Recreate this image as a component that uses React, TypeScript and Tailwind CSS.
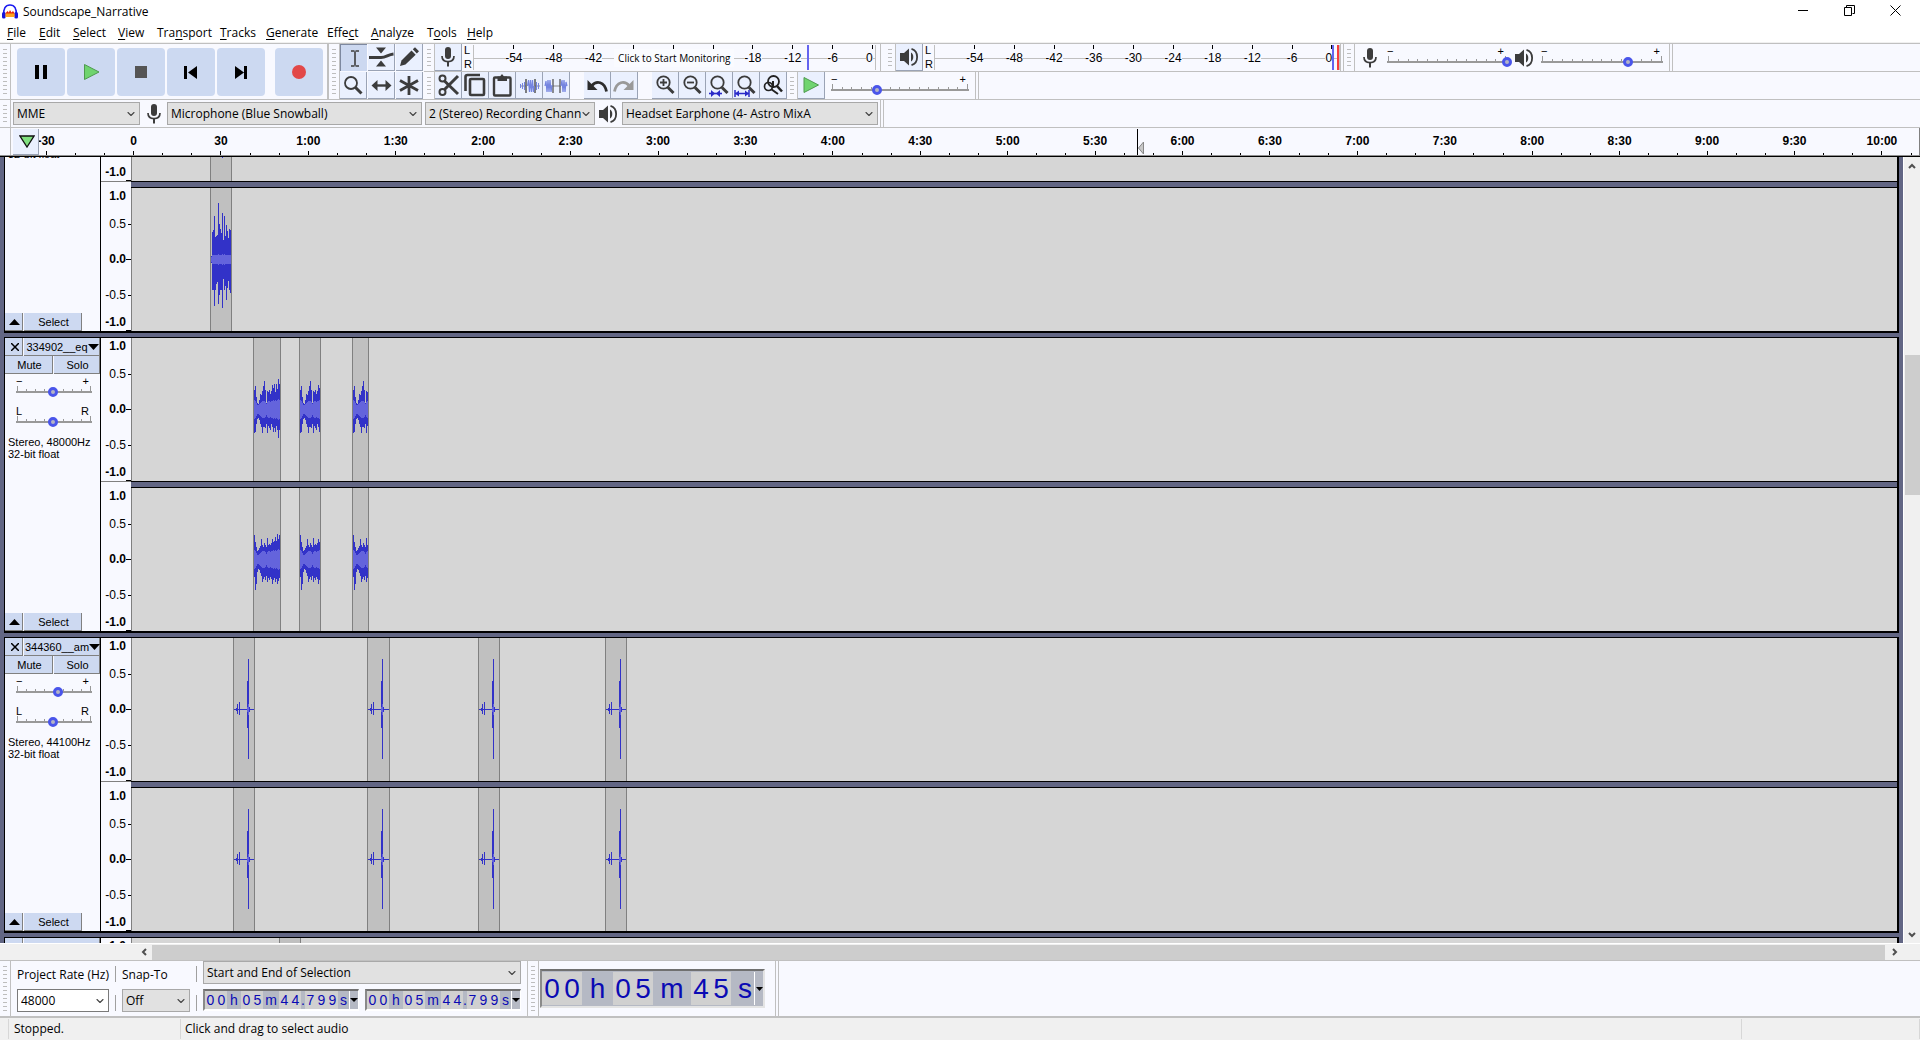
import React, { useState } from "react";
import { ChevronDown } from "lucide-react";

const INK = "#3c3c3c";

/* ---------- icons ---------- */

const Logo = () => (
  <svg className="size-4" viewBox="0 0 16 16">
    <path d="M2 11C1 4.500 3.500 1 8 1s7 3.500 6 10" fill="none" stroke="#1a1af0" strokeWidth="1.600" />
    <rect x="0" y="8" width="3.600" height="6.500" rx="1.600" fill="#1414dc" />
    <rect x="12.400" y="8" width="3.600" height="6.500" rx="1.600" fill="#1414dc" />
    <path d="M3.600 9l2-2 1.200 1.500L8 6l1.500 2.500L11 7l1.400 2v3H3.600z" fill="#e8290b" />
    <rect x="3.600" y="9.500" width="8.800" height="3.500" fill="#ffa51f" />
  </svg>
);

const Mic = () => (
  <svg className="h-5 w-4 shrink-0" viewBox="0 0 16 20">
    <rect x="5" y="0" width="6" height="12" rx="3" fill={INK} />
    <path d="M2 9c0 3.500 2.500 5.600 6 5.600S14 12.500 14 9" fill="none" stroke={INK} strokeWidth="1.700" />
    <path d="M8 14v5.500" stroke={INK} strokeWidth="2" />
  </svg>
);

const Speaker = () => (
  <svg className="size-5 shrink-0" viewBox="0 0 20 20">
    <path d="M1 6h4l5-4.500v17L5 14H1z" fill={INK} />
    <path d="M12 5.500c3 1.500 3 7.500 0 9z" fill={INK} />
    <path d="M12.500 1.800c7.500 2.200 7.500 14.200 0 16.400" fill="none" stroke={INK} strokeWidth="1.800" />
  </svg>
);

const I = ({ children }: { children: React.ReactNode }) => (
  <svg className="size-[26px] shrink-0" viewBox="0 0 26 26" fill="none" stroke={INK}>
    {children}
  </svg>
);

const IBeam = () => (
  <I>
    <path d="M10 6h3.500M14.500 6H18M14 6.500v14M10 21h3.500M14.500 21H18" strokeWidth="1.600" />
  </I>
);
const Envelope = () => (
  <I>
    <path d="M8 3.500h10l-5 6zM8 22.500h10l-5-6z" fill={INK} stroke="none" />
    <path d="M1 13.500h12c5 0 7-3 12.500-3.500" strokeWidth="3" />
  </I>
);
const Pencil = () => (
  <I>
    <path d="M4 22l1.500-5.500L15.500 6.500l4.200 4.200L9.500 20.500z" fill={INK} stroke="none" />
    <path d="M16.800 5.300L19 3.200l4 4-2.200 2.200z" fill={INK} stroke="none" />
  </I>
);
const Magnifier = () => (
  <I>
    <circle cx="11" cy="11" r="6" strokeWidth="1.800" />
    <path d="M15.500 15.500L21.500 21.500" strokeWidth="3" />
  </I>
);
const Shift = () => (
  <I>
    <path d="M6 13.500h15" strokeWidth="2.400" />
    <path d="M3.500 13.500L9.500 8v11zM23.500 13.500L17.500 8v11z" fill={INK} stroke="none" />
  </I>
);
const Asterisk = () => (
  <I>
    <path d="M13 4v19M4 8.500l18 10M22 8.500l-18 10" strokeWidth="2.800" />
  </I>
);
const Cut = () => (
  <I>
    <circle cx="7.500" cy="6.500" r="3" strokeWidth="2" />
    <circle cx="7.500" cy="20" r="3" strokeWidth="2" />
    <path d="M9.500 9L23 22M9.500 17.500L23 4" strokeWidth="3" />
  </I>
);
const Copy = () => (
  <I>
    <rect x="8" y="7" width="14" height="16" rx="1" strokeWidth="2.600" />
    <path d="M3.500 19V5q0-2 2-2H18" strokeWidth="2.600" />
  </I>
);
const Paste = () => (
  <I>
    <rect x="5" y="5.500" width="16.500" height="18" rx="1" strokeWidth="2.400" />
    <path d="M8.500 9V4.500h2.500L13 2l2 2.500h3V9z" fill={INK} stroke="none" />
  </I>
);
const Trim = () => (
  <I>
    <path d="M4 14h6M19 14h5" stroke="#888" />
    <path d="M10 7v14M19 7v14" stroke="#555" strokeWidth="1.500" />
    <path d="M11.500 14l1-6 1 12 1-12 1 12 1-12 1 12 .5-6" stroke="#7484e0" strokeWidth="1.200" />
    <path d="M4.500 12v4M6.500 11v6M8.500 10v8M20.500 10v8M22.500 11v6" stroke="#7484e0" />
  </I>
);
const Silence = () => (
  <I>
    <path d="M9 14h9" stroke="#888" />
    <path d="M10 7v14M17 7v14" stroke="#555" strokeWidth="1.300" />
    <path d="M2 14l1-5 1 11 1-12 1 12 1-12 1 12 1-7M18 14l1-6 1 12 1-12 1 12 1-10 1 4" stroke="#7484e0" strokeWidth="1.200" />
  </I>
);
const UndoIcon = () => (
  <I>
    <path d="M3.500 8v10h10z" fill="#2c2c2c" stroke="none" />
    <path d="M7.500 14c5-6 13-4.500 15 5.500" stroke="#2c2c2c" strokeWidth="2.800" />
  </I>
);
const RedoIcon = () => (
  <I>
    <path d="M22.500 8v10h-10z" fill="#999" stroke="none" />
    <path d="M18.500 14c-5-6-13-4.500-15 5.500" stroke="#999" strokeWidth="2.800" />
  </I>
);
const Lens = () => (
  <>
    <circle cx="11.500" cy="10.500" r="6.200" strokeWidth="1.800" />
    <path d="M16 15.500l5.500 5.500" strokeWidth="3" />
  </>
);
const ZoomIn = () => (
  <I>
    <Lens />
    <path d="M8 10.500h7M11.500 7v7" strokeWidth="1.800" />
  </I>
);
const ZoomOut = () => (
  <I>
    <Lens />
    <path d="M8 10.500h7" strokeWidth="1.800" />
  </I>
);
const FitSel = () => (
  <I>
    <Lens />
    <path d="M3 21.500h13" stroke="#2a2ac8" strokeWidth="1.600" />
    <path d="M5 18l4 3.500L5 25zM14 18l-4 3.500 4 3.500z" fill="#2a2ac8" stroke="none" />
  </I>
);
const FitProject = () => (
  <I>
    <Lens />
    <path d="M2 21.500h14M2 18v7M16 18v7" stroke="#2a2ac8" strokeWidth="1.500" />
    <path d="M2 21.500l4-3v6zM16 21.500l-4-3v6z" fill="#2a2ac8" stroke="none" />
  </I>
);
const ZoomToggle = () => (
  <I>
    <circle cx="13.500" cy="9.500" r="5.500" stroke="#222" strokeWidth="1.800" />
    <path d="M17 14l5 5.500" stroke="#222" strokeWidth="2.600" />
    <circle cx="8.500" cy="14.500" r="4" stroke="#222" strokeWidth="1.700" />
    <path d="M11 17l7 5M13 9v7" stroke="#222" strokeWidth="2" />
  </I>
);
const PlaySmall = () => (
  <I>
    <path d="M6 5.500v15L20.500 13z" fill="#6fd46f" stroke="#4f9a4f" />
  </I>
);

const B = ({ children }: { children: React.ReactNode }) => (
  <svg className="size-12" viewBox="0 0 48 48">
    {children}
  </svg>
);
const transport: [string, React.ReactNode][] = [
  ["Pause", <B><path d="M18 17h4v14h-4zM26 17h4v14h-4z" /></B>],
  ["Play", <B><path d="M17.500 16.500v15L32 24z" fill="#6fd46f" stroke="#4f9a4f" /></B>],
  ["Stop", <B><rect x="18" y="18" width="12" height="12" fill="#555" /></B>],
  ["Skip to start", <B><path d="M17 18h3v13h-3zM30 18v13l-9-6.500z" /></B>],
  ["Skip to end", <B><path d="M18 18v13l9-6.500zM27 18h3v13h-3z" /></B>],
];

/* ---------- controls ---------- */

function Grabber() {
  return (
    <div className="flex w-[11px] shrink-0 justify-center self-stretch border-r border-[#c0c0c0] py-[5px]">
      <div className="w-1 bg-[repeating-linear-gradient(to_bottom,#bdbdbd_0px,#bdbdbd_1px,transparent_1px,transparent_4px)]" />
    </div>
  );
}

const Edge = () => <div className="w-[4px] shrink-0 self-stretch border-x border-[#c0c0c0]" />;

function ToolButton({ label, on, children }: { label: string; on?: boolean; children: React.ReactNode }) {
  return (
    <button
      aria-label={label}
      aria-pressed={on}
      className={
        on
          ? "flex h-[27px] w-[27px] shrink-0 items-center justify-center border-l border-t border-[#7d889f] bg-[#ccd8f0]"
          : "flex h-[27px] w-[27px] shrink-0 items-center justify-center border-b border-r border-[#9aa3b5] bg-[#eaf0fe]"
      }
    >
      {children}
    </button>
  );
}

function Slider({ label, value, ticks, lo, hi }: { label: string; value: number; ticks: number; lo: string; hi: string }) {
  const [v, setV] = useState(value);
  return (
    <div className="relative w-full">
      <div className="flex h-[10px] items-center justify-between pr-[3px] text-[11px] leading-[10px]">
        <span>{lo}</span>
        <span>{hi}</span>
      </div>
      <div className="flex h-[7px] items-end justify-between border-b-2 border-[#999] px-px">
        {Array.from({ length: ticks }, (_, i) => (
          <span key={i} className={i === 0 || i === ticks - 1 ? "h-[5px] w-px bg-[#999]" : "h-[2px] w-px bg-[#999]"} />
        ))}
      </div>
      <input
        type="range"
        aria-label={label}
        min={0}
        max={100}
        value={v}
        onChange={(e) => setV(Number(e.target.value))}
        className="absolute -bottom-[4px] -left-[5px] h-[10px] w-[calc(100%+10px)] appearance-none bg-transparent [&::-webkit-slider-thumb]:size-[10px] [&::-webkit-slider-thumb]:appearance-none [&::-webkit-slider-thumb]:rounded-full [&::-webkit-slider-thumb]:border-[3px] [&::-webkit-slider-thumb]:border-[#4a55ea] [&::-webkit-slider-thumb]:bg-[#b4b4c4]"
      />
    </div>
  );
}

function Combo({ label, value, className, id }: { label: string; value: string; className: string; id?: string }) {
  return (
    <div className={"relative flex shrink-0 " + className}>
      <select
        id={id}
        aria-label={id ? undefined : label}
        className="block h-full w-full min-w-0 appearance-none bg-transparent pl-[3px] pr-3 text-[12px] leading-[18px]"
      >
        <option>{value}</option>
      </select>
      <ChevronDown className="pointer-events-none absolute right-[2px] top-1/2 size-3 -translate-y-1/2 text-[#444]" strokeWidth={2.2} />
    </div>
  );
}

const GREY = "border border-[#a8a8a8] bg-[#e1e1e1] ";

function Meter({ play }: { play?: boolean }) {
  const span = play ? 61.1 : 60.4;
  return (
    <>
      <div className="flex w-[11px] shrink-0 flex-col justify-between pl-[2px] text-[11px] leading-[13px]">
        <span>L</span>
        <span>R</span>
      </div>
      <div className="relative my-px h-[25px] min-w-0 flex-1 border-x border-[#c0c0c0]">
        <div className="absolute inset-x-0 top-[13px] h-px bg-[#c0c0c0]" />
        {[-54, -48, -42, -36, -30, -24, -18, -12, -6, 0].map((db) => {
          const hidden = !play && db >= -36 && db <= -24;
          return (
            <div key={db} className="absolute top-0 flex h-full w-0 flex-col items-center" style={{ left: `${((db + 60) / span) * 100}%` }}>
              <span className="h-[4px] w-px shrink-0 bg-black" />
              {!hidden && (
                <span className={"mt-[2px] bg-[#f8f9ff] text-[12px] leading-[14px]" + (db === 0 ? " mr-[6px]" : "")}>{db}</span>
              )}
            </div>
          );
        })}
        {!play && (
          <button className="absolute left-[35%] top-[4px] h-[18px] w-[120px] whitespace-nowrap bg-[#fafbff] font-['Open_Sans',sans-serif] text-[10px] leading-[18px]">
            Click to Start Monitoring
          </button>
        )}
        <div className={play ? "absolute right-[5px] top-0 h-full w-[2px] bg-[#6464f0]" : "absolute right-[66px] top-0 h-full w-[2px] bg-[#6464f0]"} />
        {play && <div className="absolute right-0 top-0 h-full w-[2px] bg-[#f83c3c]" />}
      </div>
    </>
  );
}

/* ---------- tracks ---------- */

type Bar = [x: number, up: number, down: number];
type Wave = { peak: Bar[]; rms: Bar[] };
type Clip = { x: number; w: number; waves: [Wave, Wave] };

const bars = (x0: number, up: number[], down: number[]): Bar[] => up.map((u, i) => [x0 + i, u, down[i] ?? u]);

const burst: Wave = {
  peak: bars(
    1,
    [3, 27, 29, 43, 22, 23, 24, 56, 35, 30, 26, 46, 19, 43, 23, 34, 28, 21, 30, 29],
    [3, 30, 30, 46, 30, 24, 22, 44, 35, 30, 30, 48, 19, 30, 26, 40, 28, 21, 30, 33]
  ),
  rms: bars(1, [2, 4, 4, 4, 4, 4, 4, 5, 4, 4, 4, 5, 4, 5, 4, 4, 4, 4, 4, 4], [2, 4, 4, 4, 4, 4, 4, 5, 4, 4, 4, 5, 4, 5, 4, 4, 4, 4, 4, 4]),
};

const humUp = [19, 23, 12, 6, 5, 9, 15, 14, 18, 23, 28, 19, 6, 18, 17, 19, 15, 18, 24, 21, 25, 17, 25, 20, 30, 25, 22];
const humDn = [23, 22, 14, 9, 8, 10, 14, 17, 23, 17, 17, 18, 14, 23, 16, 18, 20, 14, 17, 22, 18, 22, 16, 20, 28, 20, 24];
const humRms = [9, 8, 6, 4, 4, 5, 6, 7, 8, 8, 8, 7, 5, 7, 8, 8, 7, 8, 8, 9, 8, 9, 8, 9, 10, 9, 9];
const humUp2 = [24, 17, 12, 8, 9, 11, 13, 20, 14, 12, 16, 14, 12, 21, 14, 15, 14, 16, 20, 17, 18, 22, 18, 25, 20, 24, 14];
const humDn2 = [17, 30, 24, 12, 9, 10, 13, 16, 22, 19, 17, 20, 16, 22, 18, 20, 17, 19, 24, 20, 18, 22, 19, 24, 21, 18, 16];
const hum = (n: number, second: boolean): Wave => ({
  peak: bars(1, (second ? humUp2 : humUp).slice(0, n), (second ? humDn2 : humDn).slice(0, n)),
  rms: bars(1, humRms.slice(0, n), humRms.slice(0, n)),
});

const blip = (w: number): Wave => ({
  peak: [
    ...Array.from({ length: w - 2 }, (_, i): Bar => [i + 1, 0, 0]),
    [3, 1, 1],
    [4, 5, 4],
    [6, 7, 5],
    [14, 28, 18],
    [15, 50, 49],
    [16, 2, 2],
  ],
  rms: [[14, 2, 2], [15, 5, 5]],
});

const mk = (x: number, w: number, a: Wave, b: Wave): Clip => ({ x, w, waves: [a, b] });

type TrackData = { name: string; rate: string; gain: number; clips: Clip[] };
const tracks: TrackData[] = [
  { name: "328726__so", rate: "44100Hz", gain: 49, clips: [mk(78, 22, burst, burst)] },
  {
    name: "334902__eq",
    rate: "48000Hz",
    gain: 49,
    clips: [mk(121, 28, hum(26, false), hum(26, true)), mk(167, 22, hum(20, false), hum(20, true)), mk(220, 17, hum(15, false), hum(15, true))],
  },
  {
    name: "344360__am",
    rate: "44100Hz",
    gain: 55,
    clips: [mk(101, 22, blip(22), blip(22)), mk(235, 23, blip(23), blip(23)), mk(346, 22, blip(22), blip(22)), mk(473, 22, blip(22), blip(22))],
  },
  { name: "", rate: "44100Hz", gain: 49, clips: [mk(147, 22, blip(22), blip(22))] },
];

const scale: [string, string][] = [
  ["1.0", "top-[1px] font-bold"],
  ["0.5", "top-[29px]"],
  ["0.0", "top-[64px] font-bold"],
  ["-0.5", "top-[100px]"],
  ["-1.0", "top-[127px] font-bold"],
];

function ChannelRow({ clips, channel }: { clips: Clip[]; channel: 0 | 1 }) {
  return (
    <div className="flex h-[143px]">
      <div className="relative w-[30px] shrink-0 text-[12px] leading-[14px]">
        {scale.map(([t, c]) => (
          <span key={t} className={"absolute right-[5px] " + c}>
            {t}
          </span>
        ))}
        <span className="absolute right-0 top-[36px] h-px w-[3px] bg-black" />
        <span className="absolute right-0 top-[71px] h-px w-[5px] bg-black" />
        <span className="absolute right-0 top-[107px] h-px w-[3px] bg-black" />
        <span className="absolute bottom-0 right-0 h-px w-[5px] bg-black" />
      </div>
      <svg className="h-[143px] min-w-0 flex-1 border-l border-[#808080] bg-[#d6d6d6]" shapeRendering="crispEdges">
        {clips.map((c) => (
          <g key={c.x} transform={`translate(${c.x} 0)`}>
            <rect width={c.w} height="143" fill="#808080" />
            <rect x="1" width={c.w - 2} height="143" fill="#c0c0c0" />
            {c.waves[channel].peak.map(([x, u, d], i) => (
              <rect key={i} x={x} y={71 - u} width="1" height={u + d + 1} fill="#3232c8" />
            ))}
            {c.waves[channel].rms.map(([x, u, d], i) => (
              <rect key={i} x={x} y={71 - u} width="1" height={u + d + 1} fill="#6464dc" />
            ))}
          </g>
        ))}
      </svg>
    </div>
  );
}

const PANEL_BTN = "flex items-center justify-center border-b border-r border-[#808080] bg-[#cdd9f1] pl-[2px] ";

function Track({ t }: { t: TrackData }) {
  return (
    <section className="mx-1 mb-1 flex shrink-0 border-b-2 border-l border-r-2 border-t border-black bg-[#f8f9ff]">
      <div className="flex w-24 shrink-0 flex-col border-r border-black text-[11px] leading-3">
        <div className="flex h-[18px] gap-px">
          <button aria-label="Close track" className={PANEL_BTN + "w-[18px]"}>
            <svg className="size-2" viewBox="0 0 8 8">
              <path d="M0 0l8 8M8 0L0 8" stroke="#000" strokeWidth="1.500" />
            </svg>
          </button>
          <button className={PANEL_BTN + "min-w-0 flex-1"}>
            <span>{t.name}</span>
            <svg className="h-[6px] w-[11px] shrink-0" viewBox="0 0 11 6">
              <path d="M0 0h11L5.500 6z" />
            </svg>
          </button>
        </div>
        <div className="flex h-[18px] gap-px">
          <button className={PANEL_BTN + "w-12"}>Mute</button>
          <button className={PANEL_BTN + "flex-1"}>Solo</button>
        </div>
        <div className="flex flex-col gap-[13px] pl-[11px] pr-[8px] pt-[2px]">
          <Slider label="Gain" value={t.gain} ticks={9} lo="−" hi="+" />
          <Slider label="Pan" value={49} ticks={9} lo="L" hi="R" />
        </div>
        <p className="whitespace-nowrap pl-[3px] pt-[13px]">
          Stereo, {t.rate}
          <br />
          32-bit float
        </p>
        <div className="mt-auto flex h-[18px] gap-px">
          <button aria-label="Collapse track" className={PANEL_BTN + "w-[18px]"}>
            <svg className="h-[6px] w-[11px]" viewBox="0 0 11 6">
              <path d="M0 6h11L5.500 0z" />
            </svg>
          </button>
          <button className={PANEL_BTN + "w-[58px]"}>Select</button>
        </div>
      </div>
      <div className="min-w-0 flex-1">
        <ChannelRow clips={t.clips} channel={0} />
        <div className="flex h-[7px]">
          <div className="w-[30px] shrink-0 border-t border-[#808080]" />
          <div className="flex-1 border-y border-black bg-[#626684]" />
        </div>
        <ChannelRow clips={t.clips} channel={1} />
      </div>
    </section>
  );
}

/* ---------- timeline ---------- */

const fmt = (s: number) => (s < 60 ? String(s) : `${Math.floor(s / 60)}:${String(s % 60).padStart(2, "0")}`);

function Timeline() {
  const px = (s: number) => 133 + s * 2.914;
  const marks = Array.from({ length: 65 }, (_, i) => i * 10 - 30).filter((s) => px(s) < 1918);
  return (
    <div className="relative flex h-[29px] shrink-0 overflow-hidden border-b border-black bg-[#f8f9ff] text-[12px] font-bold">
      <div className="w-[11px] border-r border-[#c0c0c0]" />
      <button aria-label="Pin play head" className="relative z-10 ml-[2px] mt-px flex h-[26px] w-[26px] items-center justify-center border-b border-r border-[#9aa3b5] bg-[#eaf0fe] pl-[2px]">
        <svg className="h-[13px] w-[16px]" viewBox="0 0 16 13">
          <path d="M1 1h14L8 12z" fill="#7fe07f" stroke="#111" strokeWidth="1.300" />
        </svg>
      </button>
      {marks.map((s) => (
        <div key={s} className="absolute bottom-0 flex h-full w-0 flex-col items-center justify-end" style={{ left: px(s) + 0.5 }}>
          {s % 30 === 0 ? (
            <>
              <span className="mb-[2px] leading-4">{fmt(s)}</span>
              <span className="h-[5px] w-px bg-black" />
            </>
          ) : (
            <span className="h-[3px] w-px bg-black" />
          )}
        </div>
      ))}
      <svg className="absolute bottom-0 h-[27px] w-2" style={{ left: px(344.8) - 1 }} viewBox="0 0 8 27">
        <path d="M0.500 0v27" stroke="#000" />
        <path d="M6.500 13v12L1.500 19z" fill="#c8c8c8" stroke="#888" />
      </svg>
      <div className="absolute inset-x-0 bottom-0 h-px bg-[#909090]" />
      <div className="absolute right-0 top-0 h-full w-px bg-[#808080]" />
    </div>
  );
}

/* ---------- selection time fields ---------- */

const cell = "bg-[#d0d0d0]";

function SmallTime({ label }: { label: string }) {
  return (
    <div
      role="group"
      aria-label={label}
      className="flex h-[22px] w-[156px] items-stretch border-b-2 border-l-2 border-r border-t-2 border-b-white border-l-[#8a8a8a] border-r-white border-t-[#707070] bg-[#b5b9c4] text-[14px] leading-[18px] text-[#0a0ab4]"
    >
      {[..."00h05m44.799s"].map((ch, i) => (
        <span
          key={i}
          className={
            /\d/.test(ch)
              ? "w-[11px] text-center " + cell
              : ch === "."
                ? "w-[4px] text-center"
                : ch === "m"
                  ? "w-4 text-center"
                  : ch === "h"
                    ? "w-[14px] text-center"
                    : "w-[11px] text-center"
          }
        >
          {ch}
        </span>
      ))}
      <button aria-label={label + " format"} className="ml-auto flex w-[9px] items-center justify-center border-l border-white">
        <svg className="h-1 w-2 shrink-0" viewBox="0 0 8 4">
          <path d="M0 0h8L4 4z" />
        </svg>
      </button>
    </div>
  );
}

function BigTime() {
  return (
    <div
      role="group"
      aria-label="Audio position"
      className="flex h-[39px] w-[225px] items-stretch self-center border-2 border-b-[#e4e4e4] border-l-[#8a8a8a] border-r-[#e4e4e4] border-t-[#707070] bg-[#b5b9c4] py-px text-[28px] leading-[34px] text-[#0a0ab4]"
    >
      {[..."00h05m45s"].map((ch, i) => (
        <span
          key={i}
          className={
            /\d/.test(ch) ? "w-5 text-center " + cell : ch === "h" ? "w-[31px] text-center" : ch === "m" ? "w-[38px] text-center" : "w-[22px] pl-[7px]"
          }
        >
          {ch}
        </span>
      ))}
      <button aria-label="Audio position format" className="ml-auto flex w-[9px] items-center justify-center border-l border-white">
        <svg className="h-1 w-[7px] shrink-0" viewBox="0 0 7 4">
          <path d="M0 0h7L3.500 4z" />
        </svg>
      </button>
    </div>
  );
}

/* ---------- window ---------- */

const menus: [string, string, string, string][] = [
  ["", "F", "ile", "w-[32px]"],
  ["", "E", "dit", "w-[34px]"],
  ["", "S", "elect", "w-[45px]"],
  ["", "V", "iew", "w-[39px]"],
  ["Tra", "n", "sport", "w-[63px]"],
  ["", "T", "racks", "w-[46px]"],
  ["", "G", "enerate", "w-[61px]"],
  ["Effe", "c", "t", "w-[44px]"],
  ["", "A", "nalyze", "w-[56px]"],
  ["T", "o", "ols", "w-[40px]"],
  ["", "H", "elp", "w-[40px]"],
];

const Arrow = ({ d }: { d: string }) => (
  <svg className="size-2" viewBox="0 0 8 8">
    <path d={d} fill="none" stroke="#505050" strokeWidth="2" />
  </svg>
);

export default function App() {
  return (
    <div className="flex h-screen flex-col overflow-hidden bg-[#f8f9ff] font-['Liberation_Sans',sans-serif] text-black">
      <header className="shrink-0 border-b border-[#f0f0f0] bg-white font-['Open_Sans',sans-serif]">
        <div className="flex h-6 items-center pl-[2px] text-[12px]">
          <Logo />
          <h1 className="ml-[5px]">Soundscape_Narrative</h1>
          <div className="ml-auto flex pb-1 pr-[2px]">
            <button aria-label="Minimize" className="flex h-5 w-[46px] items-center justify-center">
              <svg className="size-[11px]" viewBox="0 0 11 11"><path d="M0 5.500h10" stroke="#000" /></svg>
            </button>
            <button aria-label="Restore" className="flex h-5 w-[46px] items-center justify-center">
              <svg className="size-[11px]" viewBox="0 0 11 11" fill="none" stroke="#000"><path d="M0.500 2.500h7v8h-7zM2.500 2.500v-2h8v8h-2" /></svg>
            </button>
            <button aria-label="Close" className="flex h-5 w-[46px] items-center justify-center">
              <svg className="size-[11px]" viewBox="0 0 11 11"><path d="M0.500 0.500l10 10M10.500 0.500l-10 10" stroke="#000" /></svg>
            </button>
          </div>
        </div>
        <nav className="flex h-[18px] items-center pl-[7px] text-[12px] leading-[18px]">
          {menus.map(([a, u, b, w]) => (
            <button key={a + u + b} className={"shrink-0 whitespace-nowrap text-left " + w}>
              {a}
              <span className="underline underline-offset-2">{u}</span>
              {b}
            </button>
          ))}
        </nav>
      </header>

      <div className="flex h-[57px] shrink-0 border-y border-[#c0c0c0]">
        <Grabber />
        <div className="flex items-center gap-[2px] pl-[6px] pr-[4px]">
          {transport.map(([label, icon]) => (
            <button key={label} aria-label={label} className="size-12 rounded-[4px] bg-[#ccd9f1]">
              {icon}
            </button>
          ))}
          <button aria-label="Record" className="ml-2 size-12 rounded-[4px] bg-[#ccd9f1]">
            <B><circle cx="24" cy="24" r="7" fill="#e24848" /></B>
          </button>
        </div>
        <div className="w-[2px] bg-[#c0c0c0]" />
        <Grabber />
        <div className="grid shrink-0 grid-cols-3 grid-rows-2 gap-px">
          <ToolButton label="Selection tool" on><IBeam /></ToolButton>
          <ToolButton label="Envelope tool"><Envelope /></ToolButton>
          <ToolButton label="Draw tool"><Pencil /></ToolButton>
          <ToolButton label="Zoom tool"><Magnifier /></ToolButton>
          <ToolButton label="Time shift tool"><Shift /></ToolButton>
          <ToolButton label="Multi tool"><Asterisk /></ToolButton>
        </div>
        <div className="ml-px min-w-0 flex-1">
          <div className="flex h-[28px] border-b border-[#c0c0c0]">
            <Grabber />
            <ToolButton label="Recording meter"><Mic /></ToolButton>
            <div className="flex w-[414px] shrink-0">
              <Meter />
            </div>
            <div className="ml-[4px] w-px bg-[#c0c0c0]" />
            <div className="ml-[4px] flex">
              <Grabber />
            </div>
            <ToolButton label="Playback meter"><Speaker /></ToolButton>
            <div className="flex w-[417px] shrink-0">
              <Meter play />
            </div>
            <Edge />
            <Grabber />
            <div className="flex items-center pl-[7px]">
              <Mic />
            </div>
            <div className="ml-[9px] w-[120px] shrink-0 pt-[2px]">
              <Slider label="Recording volume" value={100} ticks={13} lo="−" hi="+" />
            </div>
            <div className="ml-[7px] flex items-center">
              <Speaker />
            </div>
            <div className="ml-[7px] mr-[6px] w-[122px] shrink-0 pt-[2px]">
              <Slider label="Playback volume" value={71} ticks={13} lo="−" hi="+" />
            </div>
            <Edge />
          </div>
          <div className="flex h-[27px]">
            <Grabber />
            <ToolButton label="Cut"><Cut /></ToolButton>
            <ToolButton label="Copy"><Copy /></ToolButton>
            <ToolButton label="Paste"><Paste /></ToolButton>
            <ToolButton label="Trim audio"><Trim /></ToolButton>
            <ToolButton label="Silence audio"><Silence /></ToolButton>
            <div className="ml-[14px] flex">
              <ToolButton label="Undo"><UndoIcon /></ToolButton>
              <ToolButton label="Redo"><RedoIcon /></ToolButton>
            </div>
            <div className="ml-[14px] flex">
              <ToolButton label="Zoom in"><ZoomIn /></ToolButton>
              <ToolButton label="Zoom out"><ZoomOut /></ToolButton>
              <ToolButton label="Fit selection"><FitSel /></ToolButton>
              <ToolButton label="Fit project"><FitProject /></ToolButton>
              <ToolButton label="Zoom toggle"><ZoomToggle /></ToolButton>
            </div>
            <Grabber />
            <ToolButton label="Play at speed"><PlaySmall /></ToolButton>
            <div className="ml-[6px] mr-[6px] w-[138px] shrink-0 pt-[2px]">
              <Slider label="Playback speed" value={33} ticks={15} lo="−" hi="+" />
            </div>
            <Edge />
          </div>
        </div>
      </div>

      <div className="flex h-[28px] shrink-0 items-center border-b border-[#c0c0c0] font-['Open_Sans',sans-serif]">
        <Grabber />
        <Combo label="Audio host" value="MME" className={GREY + "ml-[2px] h-[23px] w-[127px]"} />
        <div className="ml-[6px] mr-[5px] flex">
          <Mic />
        </div>
        <Combo label="Recording device" value="Microphone (Blue Snowball)" className={GREY + "h-[23px] w-[255px]"} />
        <Combo label="Recording channels" value="2 (Stereo) Recording Chann" className={GREY + "ml-[3px] h-[23px] w-[170px]"} />
        <div className="ml-[3px] mr-1 flex">
          <Speaker />
        </div>
        <Combo label="Playback device" value="Headset Earphone (4- Astro MixA" className={GREY + "h-[23px] w-[256px]"} />
        <div className="ml-[2px] flex self-stretch">
          <Edge />
        </div>
      </div>

      <Timeline />

      <main className="flex min-h-0 flex-1 bg-[#f0f0f0]">
        <div className="min-w-0 flex-1 overflow-hidden border-r border-white bg-[#626684]">
          <div className="-mt-[120px] flex flex-col">
            {tracks.map((t, i) => (
              <Track key={i} t={t} />
            ))}
          </div>
        </div>
        <div className="flex w-4 shrink-0 flex-col items-center pb-[4px] pt-[5px]">
          <Arrow d="M1 6l3-3 3 3" />
          <div className="mt-[185px] h-[140px] w-[15px] bg-[#cdcdcd]" />
          <div className="mt-auto flex">
            <Arrow d="M1 2l3 3 3-3" />
          </div>
        </div>
      </main>

      <div className="flex h-[17px] shrink-0 items-center border-t border-white bg-[#f0f0f0] pl-[140px] pr-[21px]">
        <Arrow d="M6 1L3 4l3 3" />
        <div className="ml-1 mr-[6px] h-[15px] flex-1 bg-[#cdcdcd]" />
        <Arrow d="M2 1l3 3-3 3" />
      </div>

      <footer className="shrink-0 font-['Open_Sans',sans-serif] text-[12px]">
        <div className="flex h-[58px] border-b-2 border-t border-[#c0c0c0]">
          <Grabber />
          <div className="ml-[6px] flex w-[92px] flex-col">
            <label htmlFor="rate" className="flex h-[28px] items-center whitespace-nowrap">Project Rate (Hz)</label>
            <Combo id="rate" label="Project rate" value="48000" className="h-[23px] border border-[#7a7a7a] bg-white" />
          </div>
          <div className="mx-[6px] flex flex-col justify-between py-[5px]">
            <div className="h-4 w-px bg-[#a0a0a0]" />
            <div className="h-4 w-px bg-[#a0a0a0]" />
          </div>
          <div className="flex w-[68px] flex-col">
            <label htmlFor="snap" className="flex h-[28px] items-center">Snap-To</label>
            <Combo id="snap" label="Snap to" value="Off" className={GREY + "h-[23px]"} />
          </div>
          <div className="mx-[6px] flex flex-col justify-between py-[5px]">
            <div className="h-4 w-px bg-[#a0a0a0]" />
            <div className="h-4 w-px bg-[#a0a0a0]" />
          </div>
          <div className="flex w-[318px] flex-col">
            <Combo label="Selection mode" value="Start and End of Selection" className={GREY + "h-[23px]"} />
            <div className="mt-[5px] flex justify-between font-['Liberation_Sans',sans-serif]">
              <SmallTime label="Selection start" />
              <SmallTime label="Selection end" />
            </div>
          </div>
          <div className="ml-[6px] flex border-l border-[#c0c0c0]">
            <Grabber />
          </div>
          <div className="ml-px mr-[10px] flex font-['Liberation_Sans',sans-serif]">
            <BigTime />
          </div>
          <Edge />
        </div>
        <div className="flex h-[22px] items-center bg-[#f0f0f0]">
          <div className="h-5 w-[9px] border-r border-[#d7d7d7]" />
          <p className="h-5 w-[172px] border-r border-[#d7d7d7] pl-[5px] leading-5">Stopped.</p>
          <p className="h-5 flex-1 pl-1 leading-5">Click and drag to select audio</p>
          <div className="h-5 w-[179px] border-x border-[#d7d7d7]" />
        </div>
      </footer>
    </div>
  );
}
